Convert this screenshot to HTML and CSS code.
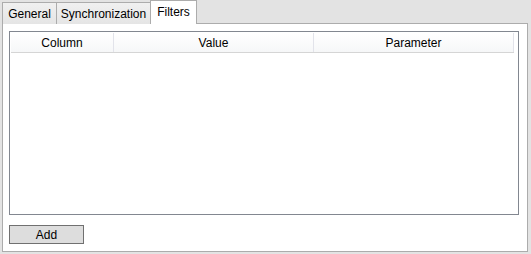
FILE: index.html
```html
<!DOCTYPE html>
<html>
<head>
<meta charset="utf-8">
<link rel="stylesheet" href="styles.css">
</head>
<body>
<div class="window">
  <div class="tabs">
    <div class="tab tab-general">General</div>
    <div class="tab tab-sync">Synchronization</div>
    <div class="tab tab-filters selected">Filters</div>
  </div>
  <div class="page">
    <div class="listbox">
      <div class="header">
        <div class="col col-column">Column</div>
        <div class="col col-value">Value</div>
        <div class="col col-param">Parameter</div>
      </div>
    </div>
    <div class="actions">
      <button class="btn">Add</button>
    </div>
  </div>
</div>
</body>
</html>
```
FILE: styles.css
```css
* { box-sizing: border-box; }
html, body { margin: 0; padding: 0; }
body {
  font-family: "Segoe UI", "Liberation Sans", "Noto Sans", sans-serif;
  font-size: 12px;
  color: #000;
  background: #e3e3e3;
}
.window {
  width: 531px;
  height: 254px;
  padding: 0 3px 2px 2px;
  display: flex;
  flex-direction: column;
}
.tabs {
  display: flex;
  align-items: flex-end;
  height: 24px;
  position: relative;
  z-index: 1;
  margin-bottom: -1px;
}
.tab {
  height: 22px;
  border: 1px solid #acacac;
  border-bottom: none;
  background: linear-gradient(#f0f0f0, #e5e5e5);
  display: flex;
  align-items: center;
  justify-content: center;
  line-height: 1;
  padding-top: 1px;
}
.tab-general { width: 55px; }
.tab-sync { width: 95px; margin-left: -1px; }
.tab-filters { width: 47px; margin-left: -1px; }
.tab.selected {
  height: 24px;
  background: #fff;
  padding-top: 0;
  padding-bottom: 1px;
}
.page {
  flex: 1;
  border: 1px solid #acacac;
  background: #fff;
  padding: 7px 8px 7px 6px;
  display: flex;
  flex-direction: column;
}
.listbox {
  height: 184px;
  border: 1px solid #828790;
  background: #fff;
  padding: 1px;
}
.header {
  display: flex;
  height: 20px;
  width: 503px;
  border-bottom: 1px solid #d5d5d5;
  background: linear-gradient(#ffffff, #f6f7f8);
}
.col {
  display: flex;
  align-items: center;
  justify-content: center;
  border-right: 1px solid #e2e3ea;
  padding-top: 1px;
}
.col-column { width: 103px; }
.col-value { width: 200px; }
.col-param { width: 200px; }
.actions {
  margin-top: 10px;
  display: flex;
}
.btn {
  width: 75px;
  height: 19px;
  border: 1px solid #707070;
  background: #dddddd;
  font-family: inherit;
  font-size: 12px;
  color: #000;
  padding: 0;
  line-height: 1;
}
```
